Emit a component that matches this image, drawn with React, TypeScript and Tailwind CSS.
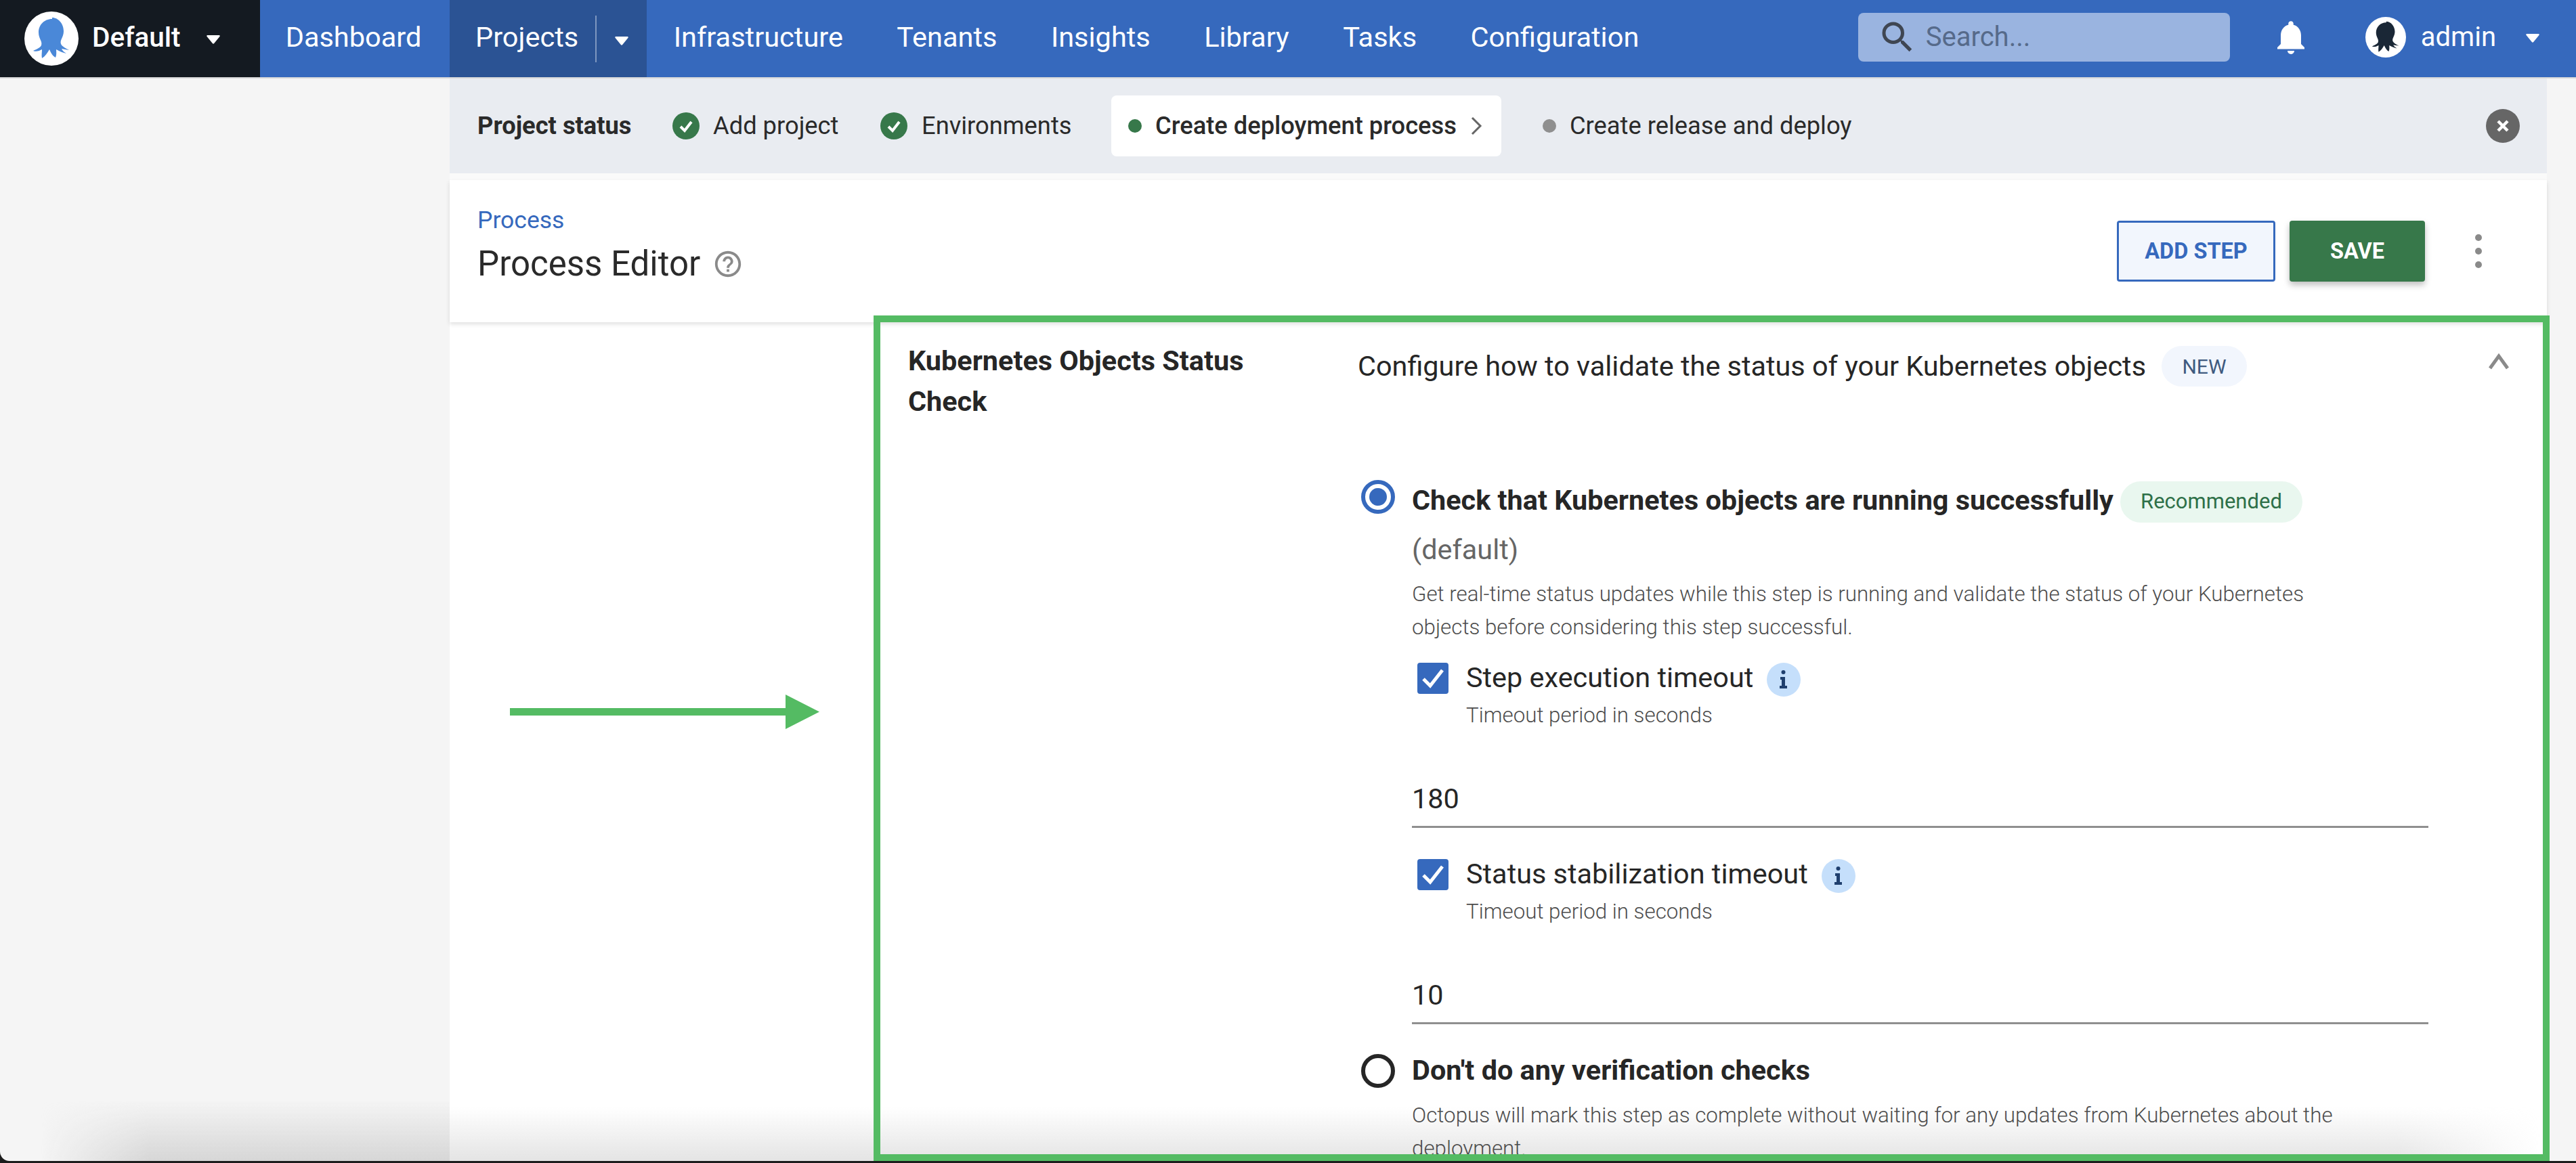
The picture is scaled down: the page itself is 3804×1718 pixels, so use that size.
import React from 'react';
import { MdHelpOutline, MdNotifications, MdSearch } from 'react-icons/md';

const navItems = ['Infrastructure', 'Tenants', 'Insights', 'Library', 'Tasks', 'Configuration'];

const OctopusPath = () => (
    <path d="M41 11C29 11 21 20 21 31c0 9 6 13 4 19-2 4-8 6-12 8 5 2 9 0 13-2 0 4-1 9 0 13 5-3 8-8 11-13 2 5 5 10 9 12 2-5 1-9 1-12 5 3 10 5 15 6-3-2-6-4-7-7 3 1 7 1 11 2-5-3-10-5-12-9-2-6 4-10 4-19 0-11-8-20-17-20z" />
);

const Logo = ({ size, color }: { size: number; color: string }) => (
    <svg width={size} height={size} viewBox="0 0 80 80" className="shrink-0">
        <circle cx="40" cy="40" r="40" fill="#fff" />
        <g fill={color}>
            <OctopusPath />
        </g>
    </svg>
);

const Caret = ({ className }: { className: string }) => (
    <svg viewBox="0 0 20 13" className={className}>
        <path d="M1.5 0h17c1 0 1.6 1.2.9 2l-8.2 10a1.5 1.5 0 0 1-2.4 0L.6 2C-.1 1.2.5 0 1.5 0z" fill="#fff" />
    </svg>
);

const DoneIcon = () => (
    <svg width="40" height="40" viewBox="0 0 40 40" className="shrink-0">
        <circle cx="20" cy="20" r="20" fill="#37784a" />
        <path d="M12 21l6 6 10-13" fill="none" stroke="#fff" strokeWidth="4" />
    </svg>
);

const InfoIcon = () => (
    <svg width="50" height="50" viewBox="0 0 50 50" className="ml-[20px] mt-[3px] shrink-0">
        <circle cx="25" cy="25" r="25" fill="#c5dffb" />
        <circle cx="24.5" cy="14" r="3" fill="#1f3f6e" />
        <path d="M20 21h7v13h3v4H19v-4h3v-9h-2z" fill="#1f3f6e" />
    </svg>
);

const Checkbox = () => (
    <svg width="46" height="46" viewBox="0 0 46 46" className="mt-[3px] shrink-0">
        <rect width="46" height="46" rx="4" fill="#3669bd" />
        <path d="M9 24l10 10 18-23" fill="none" stroke="#fff" strokeWidth="5" />
    </svg>
);

const TimeoutField = ({ label, value }: { label: string; value: string }) => (
    <div>
        <div className="flex h-[50px] items-start pl-[8px]">
            <Checkbox />
            <span className="ml-[26px] text-[41.4px] leading-[50px] text-[#262626]">{label}</span>
            <InfoIcon />
        </div>
        <p className="mt-[11px] pl-[80px] text-[31.3px] leading-[40px] font-light text-[#4d4d4d]">Timeout period in seconds</p>
        <div className="mt-[78px] w-[1501px] border-b-[3px] border-[#8f8f8f] pb-[15px] text-[41.4px] leading-[50px] text-[#262626]">
            {value}
        </div>
    </div>
);

export default function App() {
    return (
        <div className="flex h-[1718px] w-[3804px] flex-col overflow-hidden bg-[#1c1c1c] font-[family-name:Roboto,sans-serif]">
            {/* Top nav */}
            <header className="flex h-[116px] shrink-0 border-b-2 border-[#d9d9d9] bg-[#3669bd] pr-[54px] text-[40px] text-white">
                <div className="flex w-[384px] shrink-0 items-center bg-[#141a21] pl-[36px]">
                    <Logo size={80} color="#4a88d8" />
                    <span className="ml-[20px] pb-[4px] text-[40.5px] font-medium">Default</span>
                    <Caret className="ml-[38px] mt-[2px] w-[20px]" />
                </div>
                <div className="flex w-[280px] shrink-0 items-center justify-center pb-[4px] pr-[4px] text-[41.5px]">Dashboard</div>
                <div className="flex w-[291px] shrink-0 items-center bg-[#2b5394] pl-[38px] text-[41.5px]">
                    <span className="pb-[4px]">Projects</span>
                    <span className="ml-[25px] h-[69px] w-[2px] bg-[#7e97c0]" />
                    <Caret className="ml-[27px] mt-[6px] w-[20px]" />
                </div>
                <nav className="flex text-[41.5px]">
                    {navItems.map((item) => (
                        <div key={item} className="flex items-center px-[39.7px] pb-[4px]">
                            {item}
                        </div>
                    ))}
                </nav>
                <div className="ml-auto mt-[19px] flex h-[72px] w-[549px] shrink-0 items-center rounded-[8px] bg-[#9ab4e0] pl-[28px] text-[#566a8a]">
                    <MdSearch className="h-[60px] w-[60px] text-[#3f4652]" />
                    <span className="ml-[12px]">Search...</span>
                </div>
                <MdNotifications className="ml-[60px] mt-[25px] h-[60px] w-[60px] shrink-0" />
                <div className="ml-[80px] mt-[25px] shrink-0">
                    <Logo size={60} color="#1a2736" />
                </div>
                <span className="ml-[22px] mt-[30px] leading-[50px]">admin</span>
                <Caret className="ml-[44px] mt-[50px] h-[13px] w-[20px]" />
            </header>

            <div className="flex min-h-0 flex-1 rounded-bl-[14px] bg-[#f5f5f5]">
                {/* Empty sidebar */}
                <aside className="relative w-[664px] shrink-0 overflow-hidden rounded-bl-[14px]">
                    <div className="absolute bottom-0 left-0 right-0 h-[90px] bg-linear-to-t from-[#d6d6d6] to-transparent [mask-image:linear-gradient(to_right,transparent_60px,black_220px)]" />
                </aside>

                <main className="relative flex w-[3097px] shrink-0 flex-col bg-white">
                    <div className="absolute bottom-0 left-0 right-0 h-[80px] bg-linear-to-t from-[#e4e4e4] to-transparent [mask-image:linear-gradient(to_left,transparent_10px,black_220px)]" />

                    {/* Project status */}
                    <div className="flex h-[140px] shrink-0 items-center bg-[#e9ecf1] pl-[41px] pr-[40px] text-[36.3px] text-[#2a2a2a]">
                        <span className="w-[288px] font-bold">Project status</span>
                        <DoneIcon />
                        <span className="ml-[20px] w-[247px]">Add project</span>
                        <DoneIcon />
                        <span className="ml-[21px] w-[280px]">Environments</span>
                        <div className="flex h-[90px] w-[576px] items-center rounded-[8px] bg-white pl-[25px]">
                            <span className="h-[20px] w-[20px] rounded-full bg-[#37784a]" />
                            <span className="ml-[20px] font-medium">Create deployment process</span>
                            <svg width="17" height="28" viewBox="0 0 17 28" className="ml-[21px]">
                                <path d="M2 2l12 12L2 26" fill="none" stroke="#666" strokeWidth="3" />
                            </svg>
                        </div>
                        <span className="ml-[61px] h-[20px] w-[20px] rounded-full bg-[#8f8f8f]" />
                        <span className="ml-[20px]">Create release and deploy</span>
                        <svg width="50" height="50" viewBox="0 0 50 50" className="ml-auto">
                            <circle cx="25" cy="25" r="25" fill="#666" />
                            <path d="M18 18l14 14M32 18L18 32" stroke="#fff" strokeWidth="4.5" />
                        </svg>
                    </div>
                    <div className="h-[10px] shrink-0 bg-[#fafafa]" />

                    {/* Process header */}
                    <div className="flex h-[210px] shrink-0 items-center bg-white pl-[41px] pr-[96px] shadow-[0_3px_6px_rgba(0,0,0,0.12)]">
                        <div className="-mt-[20px]">
                            <a className="block text-[35.5px] leading-[50px] text-[#3669bd]">Process</a>
                            <div className="mt-[7px] flex items-center text-[51px] leading-[66px] text-[#2a2a2a]">
                                Process Editor
                                <MdHelpOutline className="ml-[18px] h-[46px] w-[46px] text-[#8a8a8a]" />
                            </div>
                        </div>
                        <button className="ml-auto h-[90px] w-[234px] rounded-[4px] border-[3px] border-[#3669bd] bg-[#f2f6fd] text-[32.5px] font-bold text-[#3669bd]">
                            ADD STEP
                        </button>
                        <button className="ml-[21px] h-[90px] w-[200px] rounded-[4px] bg-[#37784a] text-[32.5px] font-bold text-white shadow-[0_5px_10px_rgba(0,0,0,0.25)]">
                            SAVE
                        </button>
                        <svg width="10" height="50" viewBox="0 0 10 50" className="ml-[74px]">
                            <circle cx="5" cy="5" r="5" fill="#8a8a8a" />
                            <circle cx="5" cy="25" r="5" fill="#8a8a8a" />
                            <circle cx="5" cy="45" r="5" fill="#8a8a8a" />
                        </svg>
                    </div>

                    {/* Highlighted section */}
                    <div className="relative z-10 -mr-[4px] -mt-[10px] ml-[626px] flex min-h-0 flex-1 overflow-hidden border-[10px] border-[#54bb63] text-[#262626]">
                        <h3 className="w-[705px] shrink-0 pl-[41px] pr-[150px] pt-[27px] text-[41.4px] font-bold leading-[60px]">
                            Kubernetes Objects Status Check
                        </h3>
                        <div className="flex-1">
                            <div className="mt-[35px] flex h-[60px] items-center pr-[50px]">
                                <span className="text-[41.4px]">Configure how to validate the status of your Kubernetes objects</span>
                                <span className="ml-[23px] flex h-[60px] w-[126px] items-center justify-center rounded-[30px] bg-[#f2f6fd] text-[30px] text-[#3f5a7f]">
                                    NEW
                                </span>
                                <svg width="30" height="26" viewBox="0 0 30 26" className="ml-auto -mt-[14px]">
                                    <path d="M2 23L15 5l13 18" fill="none" stroke="#8a8a8a" strokeWidth="5" />
                                </svg>
                            </div>

                            <div className="ml-[5px] mt-[138px] flex">
                                <svg width="50" height="50" viewBox="0 0 50 50" className="shrink-0">
                                    <circle cx="25" cy="25" r="22" fill="none" stroke="#3669bd" strokeWidth="6" />
                                    <circle cx="25" cy="25" r="13" fill="#3669bd" />
                                </svg>
                                <div className="ml-[25px]">
                                    <div className="flex h-[61px] items-center">
                                        <span className="text-[41.4px] font-bold">Check that Kubernetes objects are running successfully</span>
                                        <span className="ml-[10px] mt-[4px] flex h-[61px] w-[269px] items-center justify-center rounded-[31px] bg-[#e9f7ef] text-[31px] text-[#2e7048]">
                                            Recommended
                                        </span>
                                    </div>
                                    <div className="mt-[12px] text-[41.4px] leading-[60px] text-[#666]">(default)</div>
                                    <p className="mt-[11px] w-[1340px] text-[31.3px] leading-[49px] font-light text-[#4d4d4d]">
                                        Get real-time status updates while this step is running and validate the status of your Kubernetes objects before considering this step successful.
                                    </p>
                                    <div className="mt-[25px] flex flex-col gap-[43px]">
                                        <TimeoutField label="Step execution timeout" value="180" />
                                        <TimeoutField label="Status stabilization timeout" value="10" />
                                    </div>
                                </div>
                            </div>

                            <div className="ml-[5px] mt-[38px] flex">
                                <svg width="50" height="50" viewBox="0 0 50 50" className="mt-[6px] shrink-0">
                                    <circle cx="25" cy="25" r="22" fill="none" stroke="#262626" strokeWidth="6" />
                                </svg>
                                <div className="ml-[25px]">
                                    <div className="text-[41.4px] font-bold leading-[60px]">Don't do any verification checks</div>
                                    <p className="mt-[12px] w-[1370px] text-[31.3px] leading-[49px] font-light text-[#4d4d4d]">
                                        Octopus will mark this step as complete without waiting for any updates from Kubernetes about the deployment.
                                    </p>
                                </div>
                            </div>
                        </div>
                    </div>
                </main>

                <div className="flex-1" />
            </div>

            {/* Annotation arrow */}
            <svg width="457" height="51" viewBox="0 0 457 51" className="absolute left-[753px] top-[1026px]">
                <path d="M0 20h407V0l50 25.5L407 51V31H0z" fill="#54bb63" />
            </svg>
            <div className="h-[3px] shrink-0" />
        </div>
    );
}
